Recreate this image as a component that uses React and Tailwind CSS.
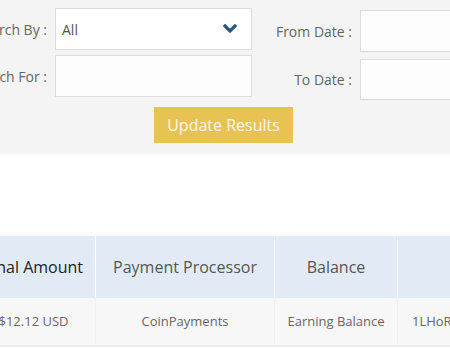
import React from 'react';

const font = { fontFamily: '"Open Sans", "Noto Sans", sans-serif' };

const Chevron = () => (
  <svg width="14" height="10" viewBox="0 0 14 10" className="shrink-0">
    <polyline points="2,2 7,7 12,2" fill="none" stroke="#2b5384" strokeWidth="3.2" strokeLinecap="square" />
  </svg>
);

const Field = ({ label, labelWidth, children, height = 'h-[42px]' }) => (
  <div className="flex items-center gap-2">
    <span className={`${labelWidth} shrink-0 text-right text-[14px] text-[#666]`}>{label}</span>
    <div className={`${height} w-[197px] shrink-0 border border-[#dcdcdc] bg-[#fdfdfd]`}>{children}</div>
  </div>
);

export default function App() {
  const cols = [
    { title: 'Final Amount', value: '$12.12 USD', w: 'w-[124px]', dark: true },
    { title: 'Payment Processor', value: 'CoinPayments', w: 'w-[179px]' },
    { title: 'Balance', value: 'Earning Balance', w: 'w-[123px]' },
  ];

  return (
    <div className="h-[349px] w-[450px] overflow-hidden bg-white" style={font}>
      <div className="bg-[#f4f4f4] pt-[8px] pb-[11px]">
        <div className="ml-[-33px] flex">
          <div className="flex flex-col gap-[5px]">
            <Field label="Search By :" labelWidth="w-[80px]">
              <div className="flex h-full items-center justify-between bg-white pl-[6px] pr-[14px] text-[14px] text-[#555]">
                <span>All</span>
                <Chevron />
              </div>
            </Field>
            <Field label="Search For :" labelWidth="w-[80px]" />
          </div>
          <div className="flex flex-col gap-[7px] pt-[2px]">
            <Field label="From Date :" labelWidth="w-[100px]" />
            <Field label="To Date :" labelWidth="w-[100px]" height="h-[41px]" />
          </div>
        </div>
        <div className="ml-[154px] mt-[7px] flex h-[36px] w-[139px] items-center justify-center bg-[#e8c252] text-[16px] text-[#fdf8e6]">
          Update Results
        </div>
      </div>

      <div className="mt-[82px] ml-[-28px] w-[700px]">
        <div className="flex h-[62px] bg-[#e2ebf5]">
          {cols.map((c) => (
            <div
              key={c.title}
              className={`${c.w} flex shrink-0 items-center justify-center whitespace-nowrap border-r border-white text-[16px] ${c.dark ? 'text-[#222]' : 'text-[#555]'}`}
            >
              {c.title}
            </div>
          ))}
          <div className="flex-1 whitespace-nowrap" />
        </div>
        <div className="flex h-[49px] border-b-2 border-[#ececec] bg-[#f7f7f7]">
          {cols.map((c) => (
            <div
              key={c.value}
              className={`${c.w} flex shrink-0 items-center justify-center whitespace-nowrap border-r border-[#f0f0f0] text-[13px] text-[#666]`}
            >
              {c.value}
            </div>
          ))}
          <div className="flex flex-1 items-center whitespace-nowrap pl-[14px] text-[13px] text-[#666]">
            1LHoRkXq8bEuYp4n7zVvXJdR2tGmW9sQcA
          </div>
        </div>
      </div>
    </div>
  );
}
